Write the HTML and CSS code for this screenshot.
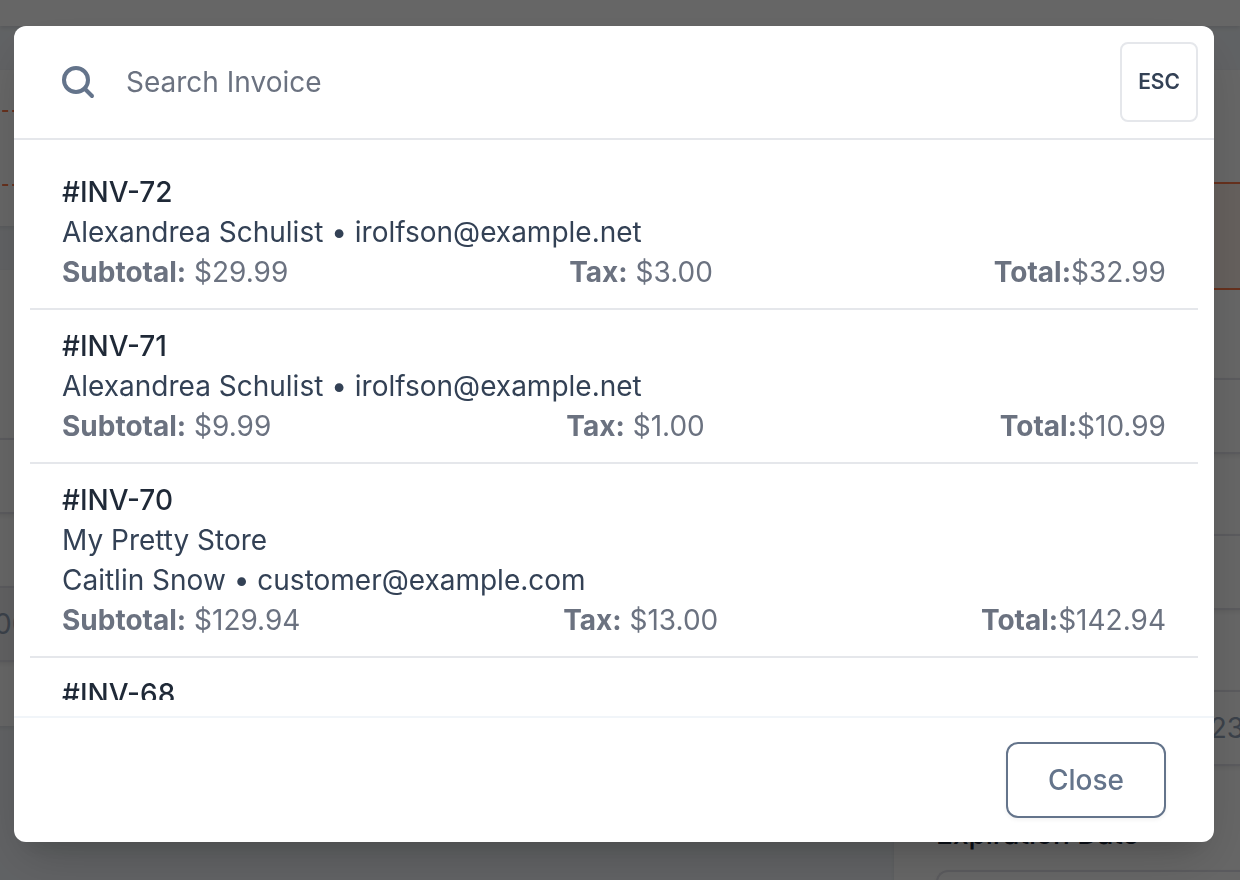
FILE: index.html
```html
<!DOCTYPE html>
<html lang="en">
<head>
    <meta charset="UTF-8">
    <meta name="viewport" content="width=device-width, initial-scale=1.0">
    <title>Search Invoice</title>
    <link rel="stylesheet" href="styles.css">
</head>
<body>
    <!-- Page behind the dialog -->
    <div class="page" inert>
        <header class="topbar"></header>
        <main class="columns">
            <div class="column">
                <section class="card">
                    <button class="add-item" type="button" aria-label="Add item"></button>
                </section>
                <section class="card card-lines">
                    <input class="field" type="text" aria-label="Quantity">
                    <input class="field field-disabled" type="text" value="00" aria-label="Amount" disabled>
                </section>
            </div>
            <form class="card card-details">
                <div class="notice"></div>
                <input class="field" type="text" aria-label="Customer">
                <input class="field" type="text" aria-label="Number">
                <input class="field field-date" type="text" value="23" aria-label="Issue date">
                <label class="field-label" for="expiration">Expiration Date</label>
                <input class="field" type="text" id="expiration">
            </form>
        </main>
    </div>

    <!-- Search dialog -->
    <div class="backdrop">
        <div class="modal" role="dialog" aria-modal="true" aria-label="Search Invoice">
            <div class="modal-header">
                <label class="search-icon" for="search" aria-label="Search Invoice">
                    <svg width="40" height="40" viewBox="0 0 40 40" fill="none" stroke="currentColor" stroke-width="4">
                        <circle cx="18" cy="18" r="12"/>
                        <path d="M26.5 26.5l7.5 7.5" stroke-linecap="round"/>
                    </svg>
                </label>
                <input class="search-input" type="text" id="search" placeholder="Search Invoice">
                <button class="esc-button" type="button">ESC</button>
            </div>

            <div class="modal-body">
                <ul class="results">
                    <li class="result">
                        <a class="result-title" href="#inv-72">#INV-72</a>
                        <p>Alexandrea Schulist • irolfson@example.net</p>
                        <div class="amounts">
                            <span><strong>Subtotal:</strong> $29.99</span>
                            <span><strong>Tax:</strong> $3.00</span>
                            <span><strong>Total:</strong>$32.99</span>
                        </div>
                    </li>
                    <li class="result">
                        <a class="result-title" href="#inv-71">#INV-71</a>
                        <p>Alexandrea Schulist • irolfson@example.net</p>
                        <div class="amounts">
                            <span><strong>Subtotal:</strong> $9.99</span>
                            <span><strong>Tax:</strong> $1.00</span>
                            <span><strong>Total:</strong>$10.99</span>
                        </div>
                    </li>
                    <li class="result">
                        <a class="result-title" href="#inv-70">#INV-70</a>
                        <p>My Pretty Store</p>
                        <p>Caitlin Snow • customer@example.com</p>
                        <div class="amounts">
                            <span><strong>Subtotal:</strong> $129.94</span>
                            <span><strong>Tax:</strong> $13.00</span>
                            <span><strong>Total:</strong>$142.94</span>
                        </div>
                    </li>
                    <li class="result">
                        <a class="result-title" href="#inv-68">#INV-68</a>
                    </li>
                </ul>
            </div>

            <div class="modal-footer">
                <button class="close-button" type="button">Close</button>
            </div>
        </div>
    </div>
</body>
</html>
```
FILE: styles.css
```css
* {
    margin: 0;
    padding: 0;
    box-sizing: border-box;
}

body {
    font-family: Inter, "Liberation Sans", sans-serif;
    font-optical-sizing: none;
    font-size: 28px;
    line-height: 40px;
    color: #334155;
    background-color: #f1f5f9;
    overflow: hidden;
}

input,
button {
    font: inherit;
    color: inherit;
}

/* Page behind the dialog */
.page {
    height: 100vh;
    display: flex;
    flex-direction: column;
    overflow: hidden;
}

.topbar {
    height: 26px;
    flex-shrink: 0;
    background-color: white;
    box-shadow: 0 2px 4px rgba(0,0,0,0.1);
}

.columns {
    display: grid;
    grid-template-columns: 1fr 350px;
    gap: 44px;
    margin-left: -48px;
    margin-right: -4px;
    padding-top: 44px;
}

.column {
    display: flex;
    flex-direction: column;
    gap: 44px;
}

.card {
    background-color: white;
    padding: 40px 0;
    box-shadow: 0 2px 4px rgba(0,0,0,0.08);
}

.add-item {
    display: block;
    width: 100%;
    height: 76px;
    background: none;
    border: 2px dashed #ff7a4a;
}

.card-lines {
    display: flex;
    flex-direction: column;
    gap: 72px;
    padding: 168px 0 64px;
}

.field {
    width: 100%;
    height: 76px;
    flex-shrink: 0;
    background-color: white;
    border: 2px solid #e2e2ea;
    border-right: none;
    border-radius: 12px 0 0 12px;
    color: #94a3b8;
    box-shadow: 0 2px 4px rgba(0,0,0,0.08);
}

.field-disabled {
    background-color: #f1f2f4;
    padding-left: 40px;
}

.card-details {
    display: flex;
    flex-direction: column;
    gap: 80px;
    padding: 112px 0 40px 42px;
    height: 900px;
}

.notice {
    height: 108px;
    flex-shrink: 0;
    margin-bottom: 8px;
    background-color: #fdf0e8;
    border: 2px solid #ff7a4a;
    border-right: none;
}

.field-date {
    text-align: right;
    margin-bottom: -32px;
}

.field-label {
    font-weight: 500;
    color: #1e293b;
    margin-bottom: -64px;
}

/* Search dialog */
.backdrop {
    position: fixed;
    inset: 0;
    padding: 26px 26px 38px 14px;
    background-color: rgba(0,0,0,0.6);
    display: flex;
}

.modal {
    flex: 1;
    min-width: 0;
    display: flex;
    flex-direction: column;
    background-color: white;
    border-radius: 12px;
    box-shadow: 0 20px 50px -10px rgba(0,0,0,0.2), 0 16px 20px -12px rgba(0,0,0,0.1);
    overflow: hidden;
}

.modal-header {
    display: flex;
    align-items: stretch;
    padding: 16px 16px 16px 44px;
    border-bottom: 2px solid #e5e7eb;
}

.search-icon {
    display: flex;
    align-items: center;
    color: #64748b;
}

.search-input {
    flex: 1;
    min-width: 0;
    height: 80px;
    padding: 0 28px;
    border: none;
    outline: none;
    background: none;
}

.search-input::placeholder {
    color: #6b7280;
    opacity: 1;
}

.esc-button {
    padding: 0 16px;
    font-size: 21px;
    font-weight: 600;
    background: none;
    border: 2px solid #e5e7eb;
    border-radius: 8px;
    cursor: pointer;
}

.modal-body {
    flex: 1;
    min-height: 0;
    padding: 16px;
    display: flex;
}

.results {
    flex: 1;
    list-style: none;
    overflow-y: auto;
    scrollbar-width: none;
}

.result {
    padding: 16px 32px;
    border-bottom: 2px solid #e5e7eb;
}

.result-title {
    display: block;
    font-weight: 500;
    color: #1f2937;
    text-decoration: none;
}

.amounts {
    display: flex;
    justify-content: space-between;
    color: #6b7280;
}

.modal-footer {
    display: flex;
    justify-content: flex-end;
    padding: 24px 48px;
    border-top: 2px solid #f1f5f9;
}

.close-button {
    padding: 16px 40px;
    font-weight: 500;
    color: #64748b;
    background-color: white;
    border: 2px solid #64748b;
    border-radius: 12px;
    box-shadow: 0 2px 4px rgba(0,0,0,0.05);
    cursor: pointer;
}
```
